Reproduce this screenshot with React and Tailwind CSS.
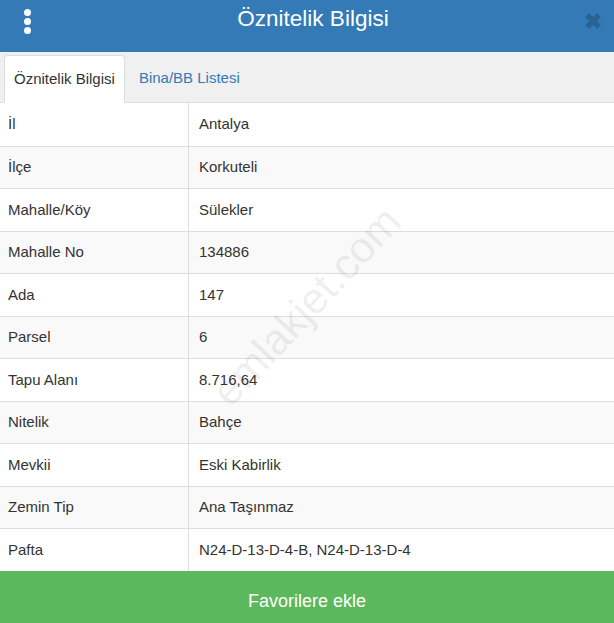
const rows = [
  ["İl", "Antalya"],
  ["İlçe", "Korkuteli"],
  ["Mahalle/Köy", "Sülekler"],
  ["Mahalle No", "134886"],
  ["Ada", "147"],
  ["Parsel", "6"],
  ["Tapu Alanı", "8.716,64"],
  ["Nitelik", "Bahçe"],
  ["Mevkii", "Eski Kabirlik"],
  ["Zemin Tip", "Ana Taşınmaz"],
  ["Pafta", "N24-D-13-D-4-B, N24-D-13-D-4"],
];

const App = () => {
  return (
    <div className="w-[614px] h-[623px] flex flex-col bg-white text-[#333] font-['Liberation_Sans',Arial,sans-serif] overflow-hidden relative">
      {/* header */}
      <div className="h-[52px] bg-[#337ab7] grid grid-cols-[1fr_auto_1fr] items-start pl-[24px] pr-[12px] pt-[6px]">
        <div className="flex flex-col gap-[2px] pt-[3px]">
          <span className="w-[7px] h-[7px] rounded-full bg-white"></span>
          <span className="w-[7px] h-[7px] rounded-full bg-white"></span>
          <span className="w-[7px] h-[7px] rounded-full bg-white"></span>
        </div>
        <h1 className="text-[22.5px] leading-[26px] text-white">Öznitelik Bilgisi</h1>
        <span className="justify-self-end text-[22px] leading-[26px] font-bold text-black/20 pt-[3px]">✖</span>
      </div>

      {/* tabs */}
      <div className="h-[51px] bg-[#f0f0f0] border-b border-[#ddd] flex items-end pl-[4px] text-[15px]">
        <div className="h-[48px] -mb-px bg-white border border-[#ddd] border-b-white rounded-t-[4px] px-[9px] flex items-center">
          Öznitelik Bilgisi
        </div>
        <div className="h-[48px] px-[14px] flex items-center text-[#337ab7]">Bina/BB Listesi</div>
      </div>

      {/* table */}
      <div className="flex-1 flex flex-col text-[15px]">
        {rows.map((r, i) => (
          <div
            key={r[0]}
            className={`flex h-[42.5px] ${i > 0 ? "border-t border-[#ddd]" : ""} ${i % 2 ? "bg-[#f9f9f9]" : "bg-white"}`}
          >
            <div className="w-[189px] border-r border-[#ddd] px-[8px] flex items-center">{r[0]}</div>
            <div className="flex-1 px-[10px] flex items-center">{r[1]}</div>
          </div>
        ))}
      </div>

      {/* watermark */}
      <div className="absolute left-[176px] top-[284px] w-[260px] text-center text-[43px] leading-[44px] text-black/[0.08] -rotate-[47deg] pointer-events-none">
        emlakjet.com
      </div>

      <button className="h-[52px] bg-[#5cb85c] text-white text-[18px] flex items-center justify-center pt-[9px]">
        Favorilere ekle
      </button>
    </div>
  );
};

export default App;
